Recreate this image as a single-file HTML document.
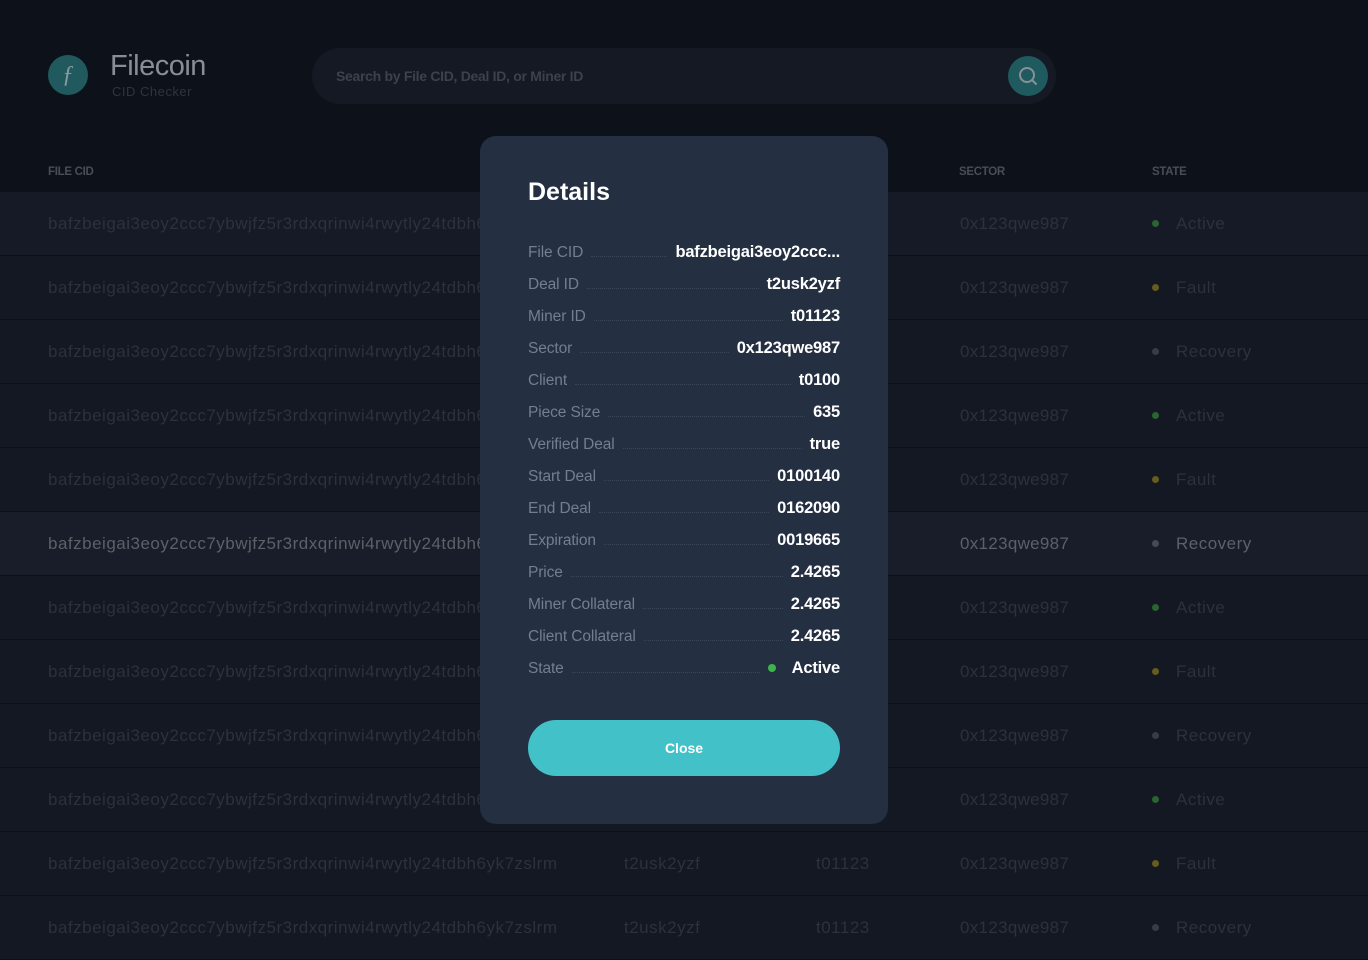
<!DOCTYPE html>
<html><head><meta charset="utf-8"><style>
*{box-sizing:border-box;margin:0;padding:0}
body{width:1368px;height:960px;overflow:hidden;background:#0d111a;font-family:"Liberation Sans",sans-serif;position:relative}
.logo{position:absolute;left:48px;top:55px;width:40px;height:40px;border-radius:50%;background:#205a5e;color:#8a9a9c;font:italic 24px "Liberation Serif",serif;text-align:center;line-height:40px}
.brand{position:absolute;left:110px;top:50px;color:#8a8d93;font-size:29px;letter-spacing:-0.5px}
.sub{position:absolute;left:112px;top:84px;color:#30343c;font-size:13px;letter-spacing:0.5px}
.search{position:absolute;left:312px;top:48px;width:744px;height:56px;border-radius:28px;background:#141923}
.search span{position:absolute;left:24px;top:20px;color:#3c414b;font-size:14px;font-weight:bold;letter-spacing:-0.3px}
.sbtn{position:absolute;left:1008px;top:56px;width:40px;height:40px;border-radius:50%;background:#1f5a5f}
.th{position:absolute;top:166px;color:#484d58;font-size:11.5px;font-weight:bold;letter-spacing:-0.3px}
.row{position:absolute;left:0;width:1368px;height:64px;background:#131823;border-bottom:1px solid #0b0f17;color:#2c313c;font-size:17px}
.row.hl{background:#181d29;color:#5c6068}
.row div{position:absolute;top:22px;white-space:nowrap}
.dot{width:7px;height:7px;border-radius:50%;top:28px!important}
.modal{position:absolute;left:480px;top:136px;width:408px;height:688px;background:#252f42;border-radius:16px}
.modal h1{position:absolute;left:48px;top:42px;color:#fff;font-size:25px;font-weight:bold}
.kv{position:absolute;left:48px;width:312px;height:24px;display:flex;align-items:baseline;margin-top:3px}
.kv .k{color:#737e93;font-size:15.5px;letter-spacing:-0.1px;white-space:nowrap}
.kv .f{flex:1;border-bottom:1px dotted #3a4558;margin:0 8px}
.kv .v{color:#fff;font-size:16.5px;font-weight:bold;white-space:nowrap;letter-spacing:-0.2px}
.btn{position:absolute;left:48px;top:584px;width:312px;height:56px;border-radius:28px;background:#42c1c9;color:#fff;font-size:14px;font-weight:bold;text-align:center;line-height:56px}
</style></head><body>
<div class="logo">ƒ</div>
<div class="brand">Filecoin</div>
<div class="sub">CID Checker</div>
<div class="search"><span>Search by File CID, Deal ID, or Miner ID</span></div>
<div class="sbtn"><svg width="40" height="40" viewBox="0 0 40 40"><circle cx="19" cy="19" r="7" fill="none" stroke="#8a8f96" stroke-width="2"/><path d="M24 24l4 4" stroke="#8a8f96" stroke-width="2" stroke-linecap="round"/></svg></div>
<div class="th" style="left:48px">FILE CID</div>
<div class="th" style="left:959px">SECTOR</div>
<div class="th" style="left:1152px">STATE</div>
<div id="rows"></div>
<div class="modal">
<h1>Details</h1>
<div class="kv" style="top:104px"><span class="k">File CID</span><span class="f"></span><span class="v">bafzbeigai3eoy2ccc...</span></div>
<div class="kv" style="top:136px"><span class="k">Deal ID</span><span class="f"></span><span class="v">t2usk2yzf</span></div>
<div class="kv" style="top:168px"><span class="k">Miner ID</span><span class="f"></span><span class="v">t01123</span></div>
<div class="kv" style="top:200px"><span class="k">Sector</span><span class="f"></span><span class="v">0x123qwe987</span></div>
<div class="kv" style="top:232px"><span class="k">Client</span><span class="f"></span><span class="v">t0100</span></div>
<div class="kv" style="top:264px"><span class="k">Piece Size</span><span class="f"></span><span class="v">635</span></div>
<div class="kv" style="top:296px"><span class="k">Verified Deal</span><span class="f"></span><span class="v">true</span></div>
<div class="kv" style="top:328px"><span class="k">Start Deal</span><span class="f"></span><span class="v">0100140</span></div>
<div class="kv" style="top:360px"><span class="k">End Deal</span><span class="f"></span><span class="v">0162090</span></div>
<div class="kv" style="top:392px"><span class="k">Expiration</span><span class="f"></span><span class="v">0019665</span></div>
<div class="kv" style="top:424px"><span class="k">Price</span><span class="f"></span><span class="v">2.4265</span></div>
<div class="kv" style="top:456px"><span class="k">Miner Collateral</span><span class="f"></span><span class="v">2.4265</span></div>
<div class="kv" style="top:488px"><span class="k">Client Collateral</span><span class="f"></span><span class="v">2.4265</span></div>
<div class="kv" style="top:520px"><span class="k">State</span><span class="f"></span><span class="v"><span style="display:inline-block;width:8px;height:8px;border-radius:50%;background:#3cb64a;margin:0 16px 2px 0;vertical-align:middle"></span>Active</span></div>
<div class="btn">Close</div>
</div>
<script>
var st=[["Active","#2a6430"],["Fault","#665c1d"],["Recovery","#373c48"]],h="";
for(var i=0;i<12;i++){var s=st[i%3],hl=i==5;var dc=hl?"#454a55":s[1];
h+='<div class="row'+(hl?' hl':'')+'" style="top:'+(192+i*64)+'px;'+(i==0?'background:#151a26':'')+'"><div style="left:48px;letter-spacing:0.5px">bafzbeigai3eoy2ccc7ybwjfz5r3rdxqrinwi4rwytly24tdbh6yk7zslrm</div><div style="left:624px;letter-spacing:0.5px">t2usk2yzf</div><div style="left:816px;letter-spacing:0.5px">t01123</div><div style="left:960px;letter-spacing:0.3px">0x123qwe987</div><div class="dot" style="left:1152px;background:'+dc+'"></div><div style="left:1176px;letter-spacing:0.5px">'+s[0]+'</div></div>';}
document.getElementById("rows").innerHTML=h;
</script>
</body></html>
